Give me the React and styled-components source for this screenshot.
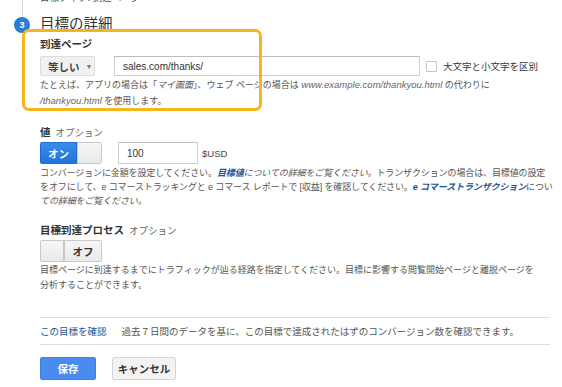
import React from 'react';
import styled, { createGlobalStyle } from 'styled-components';

const GlobalStyle = createGlobalStyle`
  html, body {
    margin: 0;
    padding: 0;
    background: #fff;
    overflow: hidden;
  }
  body {
    font-family: "Liberation Sans", "Noto Sans CJK JP", sans-serif;
    color: #444;
  }
`;

const Page = styled.div`
  position: relative;
  width: 562px;
  height: 387px;
  overflow: hidden;
`;

// previous step, only its bottom edge shows
const PrevStep = styled.div`
  margin-left: 22px;
  height: 17px;
  border-left: 1px solid #d6d6d6;
  padding-left: 17px;
  overflow: hidden;
`;

const PrevText = styled.div`
  margin-top: -7px;
  font-size: 9.5px;
  line-height: 10px;
  color: #555;
`;

const StepHead = styled.div`
  display: flex;
  align-items: center;
  height: 16px;
`;

const Badge = styled.div`
  width: 16px;
  height: 16px;
  margin-left: 14px;
  border-radius: 50%;
  background: #2b7bd3;
  color: #fff;
  font-size: 9px;
  font-weight: bold;
  display: flex;
  align-items: center;
  justify-content: center;
`;

const StepTitle = styled.div`
  margin-left: 10px;
  margin-top: -3px;
  font-size: 14.5px;
  line-height: 18px;
  color: #333;
`;

// yellow annotation frame drawn over the form
const Highlight = styled.div`
  position: absolute;
  left: 22px;
  top: 29px;
  width: 240px;
  height: 82px;
  box-sizing: border-box;
  border: 3px solid #f7b51c;
  border-radius: 7px;
  pointer-events: none;
`;

const Content = styled.div`
  padding-left: 40px;
`;

const Label = styled.div`
  margin-top: ${p => p.$top || 0}px;
  font-size: 10.5px;
  line-height: 12px;
  font-weight: bold;
  color: #333;
  display: flex;
  align-items: baseline;
  gap: 5px;
`;

const Optional = styled.span`
  font-weight: normal;
  font-size: 9.5px;
  color: #666;
`;

const Row = styled.div`
  display: flex;
  align-items: center;
  margin-top: ${p => p.$top || 0}px;
  height: ${p => p.$h}px;
`;

const Dropdown = styled.div`
  width: 55px;
  height: 20px;
  box-sizing: border-box;
  background: #f1f1f1;
  border: 1px solid #dcdcdc;
  border-radius: 2px;
  display: flex;
  align-items: center;
  padding-left: 7px;
  gap: 6px;
  font-size: 10.5px;
  font-weight: bold;
  color: #444;
`;

const Caret = styled.span`
  font-size: 7px;
  color: #777;
  font-weight: normal;
`;

const TextInput = styled.div`
  width: ${p => p.$w}px;
  height: 100%;
  margin-left: ${p => p.$left}px;
  box-sizing: border-box;
  border: 1px solid #cfcfcf;
  border-top-color: #bdbdbd;
  display: flex;
  align-items: center;
  padding-left: 8px;
  font-size: 10px;
  color: #333;
`;

const Check = styled.div`
  width: 9px;
  height: 9px;
  margin-left: 6px;
  border: 1px solid #c4c4c4;
  border-radius: 1px;
`;

const CheckLabel = styled.span`
  margin-left: 6px;
  font-size: 9.5px;
  color: #333;
`;

const Help = styled.p`
  margin: ${p => p.$top || 0}px 0 0;
  font-size: 9px;
  line-height: ${p => p.$lh || 14}px;
  letter-spacing: ${p => p.$ls || 0}px;
  color: #555;
  white-space: nowrap;
`;

const Ex = styled.i`
  color: #666;
  font-size: 9.5px;
`;

const Link = styled.a`
  color: #1b5591;
  font-style: ${p => (p.$italic ? 'italic' : 'normal')};
  font-weight: ${p => (p.$italic ? 'bold' : 'normal')};
  text-decoration: none;
`;

const Toggle = styled.div`
  display: flex;
  height: 100%;
  width: 62px;
  border-radius: 2px;
  overflow: hidden;
`;

const Seg = styled.div`
  width: ${p => p.$w}px;
  box-sizing: border-box;
  display: flex;
  align-items: center;
  justify-content: center;
  font-size: 10.5px;
  font-weight: bold;
  color: ${p => (p.$on ? '#fff' : '#333')};
  background: ${p => (p.$on ? 'linear-gradient(#3a8ceb, #1f74dc)' : 'linear-gradient(#f6f6f6, #e9e9e9)')};
  border: 1px solid ${p => (p.$on ? '#1f6fcf' : '#c9c9c9')};
`;

const Unit = styled.span`
  margin-left: 4px;
  font-size: 9.5px;
  color: #444;
`;

const CheckRow = styled.div`
  margin-top: 24px;
  width: 510px;
  height: 26px;
  border-top: 1px solid #dedede;
  border-bottom: 1px solid #dedede;
  display: flex;
  align-items: center;
  gap: 15px;
  font-size: 9.5px;
  color: #555;
`;

const Buttons = styled.div`
  display: flex;
  gap: 16px;
  margin-top: 12px;
  height: 23px;
`;

const Button = styled.button`
  width: ${p => p.$w}px;
  height: 23px;
  padding: 0;
  border-radius: 2px;
  font-family: inherit;
  font-size: 10.5px;
  font-weight: bold;
  color: ${p => (p.$primary ? '#fff' : '#333')};
  background: ${p => (p.$primary ? '#4a8bef' : '#f3f3f3')};
  border: 1px solid ${p => (p.$primary ? '#3f7fe3' : '#d6d6d6')};
`;

const BottomRule = styled.div`
  margin: 9px 0 0 4px;
  width: 546px;
  border-top: 1px solid #d9d9d9;
`;

export default function App() {
  return (
    <Page>
      <GlobalStyle />
      <PrevStep>
        <PrevText>目標タイプ: 到達ページ</PrevText>
      </PrevStep>
      <StepHead>
        <Badge>3</Badge>
        <StepTitle>目標の詳細</StepTitle>
      </StepHead>

      <Content>
        <Label $top={5}>到達ページ</Label>
        <Row $top={6} $h={20}>
          <Dropdown>
            等しい <Caret>▼</Caret>
          </Dropdown>
          <TextInput $w={306} $left={19}>sales.com/thanks/</TextInput>
          <Check />
          <CheckLabel>大文字と小文字を区別</CheckLabel>
        </Row>
        <Help $lh={15} $top={1}>
          たとえば、アプリの場合は「<i>マイ画面</i>」、ウェブ ページの場合は <Ex>www.example.com/thankyou.html</Ex> の代わりに
          <br />
          <Ex>/thankyou.html</Ex> を使用します。
        </Help>

        <Label $top={17}>
          値 <Optional>オプション</Optional>
        </Label>
        <Row $top={3} $h={22}>
          <Toggle>
            <Seg $on $w={37}>オン</Seg>
            <Seg $w={25} />
          </Toggle>
          <TextInput $w={80} $left={16}>100</TextInput>
          <Unit>$USD</Unit>
        </Row>
        <Help $top={2} $ls={-0.12}>
          コンバージョンに金額を設定してください。<Link $italic href="#">目標値</Link>
          <i>についての詳細をご覧ください。</i>トランザクションの場合は、目標値の設定
          <br />
          をオフにして、e コマーストラッキングと e コマース レポートで [収益] を確認してください。
          <Link $italic href="#">e コマーストランザクション</Link>につい
          <br />
          <i>ての詳細をご覧ください。</i>
        </Help>

        <Label $top={16}>
          目標到達プロセス <Optional>オプション</Optional>
        </Label>
        <Row $top={3} $h={22}>
          <Toggle>
            <Seg $w={24} />
            <Seg $w={38}>オフ</Seg>
          </Toggle>
        </Row>
        <Help $lh={15} $top={1}>
          目標ページに到達するまでにトラフィックが辿る経路を指定してください。目標に影響する閲覧開始ページと離脱ページを
          <br />
          分析することができます。
        </Help>

        <CheckRow>
          <Link href="#">この目標を確認</Link>
          <span>過去７日間のデータを基に、この目標で達成されたはずのコンバージョン数を確認できます。</span>
        </CheckRow>

        <Buttons>
          <Button $primary $w={56}>保存</Button>
          <Button $w={64}>キャンセル</Button>
        </Buttons>
      </Content>
      <BottomRule />
      <Highlight />
    </Page>
  );
}
